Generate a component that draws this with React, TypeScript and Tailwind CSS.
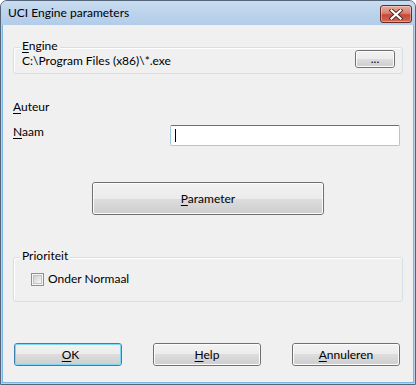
import React from "react";

function U({ children }: { children: React.ReactNode }) {
  return <span className="underline decoration-1 underline-offset-[2px]">{children}</span>;
}

function WinButton({
  children,
  className = "",
  isDefault = false,
  innerClass = "",
}: {
  children: React.ReactNode;
  className?: string;
  isDefault?: boolean;
  innerClass?: string;
}) {
  return (
    <div
      className={`rounded-[3px] border ${isDefault ? "border-[#3c7fb1]" : "border-[#707070]"} ${className}`}
    >
      <div
        className={`w-full h-full rounded-[2px] border ${isDefault ? "border-[#7fd6f7]" : "border-[#fbfbfb]"} bg-[linear-gradient(to_bottom,#f2f2f2_0%,#ebebeb_50%,#dddddd_50%,#cfcfcf_100%)] flex items-center justify-center text-[12px] leading-[16px] text-black ${innerClass}`}
      >
        {children}
      </div>
    </div>
  );
}

function GroupBox({
  label,
  className = "",
  children,
}: {
  label: React.ReactNode;
  className?: string;
  children?: React.ReactNode;
}) {
  return (
    <div
      className={`relative rounded-[3px] border border-[#d5dfe5] shadow-[inset_1px_1px_0_#ffffff] ${className}`}
    >
      <div className="absolute left-[6px] top-[-9px] px-[2px] bg-[#f0f0f0] text-[12px] leading-[14px] text-black">
        {label}
      </div>
      {children}
    </div>
  );
}

function CloseButton() {
  return (
    <div className="mt-[4px] w-[32px] h-[18px] rounded-[3px] border border-[#6b2b22] bg-[linear-gradient(to_bottom,#e9a99c_0%,#d9816f_45%,#c44a37_55%,#cf6b55_100%)] flex items-center justify-center shadow-[inset_0_0_0_1px_rgba(255,255,255,0.35)]">
      <svg width="14" height="11" viewBox="0 0 14 11">
        <path d="M2.5 1.5 L11.5 9.5 M11.5 1.5 L2.5 9.5" stroke="#4a2a26" strokeWidth="4" strokeLinecap="square" />
        <path d="M2.5 1.5 L11.5 9.5 M11.5 1.5 L2.5 9.5" stroke="#ffffff" strokeWidth="2.2" strokeLinecap="square" />
      </svg>
    </div>
  );
}

export default function App() {
  return (
    <div className="w-[416px] h-[385px] flex flex-col bg-[#b9d1ea] border border-[#55667a] rounded-t-[7px] overflow-hidden font-['Lato','Open_Sans',sans-serif] text-black">
      {/* Title bar */}
      <div className="h-[24px] flex justify-between pl-[7px] pr-[3px] bg-[linear-gradient(to_bottom,#c9dcf0_0%,#bcd3ec_50%,#b2cce9_100%)]">
        <div className="self-center text-[12px] leading-[16px] text-black">UCI Engine parameters</div>
        <CloseButton />
      </div>

      {/* Client area */}
      <div className="flex-1 mx-[1px] mb-[1px] border-x border-b border-[#7db5e2] bg-[#f0f0f0] flex flex-col text-[12px] leading-[16px]">
        {/* Engine group */}
        <GroupBox label={<><U>E</U>ngine</>} className="mt-[22px] mx-[10px] h-[27px]">
          <div className="flex justify-between pl-[8px] pr-[7px]">
            <div className="mt-[5px]">C:\Program Files (x86)\*.exe</div>
            <WinButton className="mt-[2px] w-[40px] h-[18px]">
              ...
            </WinButton>
          </div>
        </GroupBox>

        {/* Auteur */}
        <div className="mt-[25px] pl-[10px]">
          <U>A</U>uteur
        </div>

        {/* Naam row */}
        <div className="mt-[9px] flex">
          <div className="ml-[10px] w-[157px]">
            <U>N</U>aam
          </div>
          <div className="mt-[1px] w-[230px] h-[21px] rounded-[2px] border border-[#a4c9e3] border-t-[#3d7bad] bg-white flex items-center pl-[4px]">
            <div className="w-[1px] h-[13px] bg-black" />
          </div>
        </div>

        {/* Parameter button */}
        <WinButton className="mt-[36px] ml-[89px] w-[232px] h-[33px]">
          <span>
            <U>P</U>arameter
          </span>
        </WinButton>

        {/* Prioriteit group */}
        <GroupBox label="Prioriteit" className="mt-[42px] mx-[10px] h-[45px]">
          <div className="mt-[13px] ml-[17px] flex items-center h-[16px] gap-[4px]">
            <div className="w-[13px] h-[13px] border border-[#8e8f8f] bg-[#f4f4f4] p-[1px]">
              <div className="w-full h-full border border-[#c0c4c9] bg-[linear-gradient(135deg,#cbcfd5_0%,#e6e7e9_60%,#f7f7f7_100%)]" />
            </div>
            <div>Onder Normaal</div>
          </div>
        </GroupBox>

        {/* Bottom buttons */}
        <div className="mt-[41px] ml-[11px] flex gap-[31px]">
          <WinButton isDefault className="w-[108px] h-[23px]" innerClass="pl-[5px]">
            <span>
              <U>O</U>K
            </span>
          </WinButton>
          <WinButton className="w-[108px] h-[23px]">
            <span>
              <U>H</U>elp
            </span>
          </WinButton>
          <WinButton className="w-[108px] h-[23px]">
            <span>
              <U>A</U>nnuleren
            </span>
          </WinButton>
        </div>
      </div>
    </div>
  );
}
